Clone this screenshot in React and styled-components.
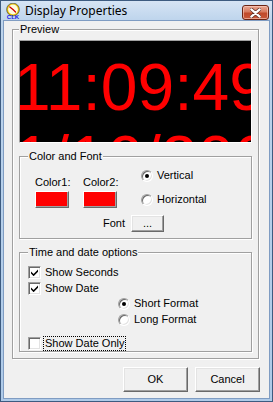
import React from "react";
import styled, { createGlobalStyle } from "styled-components";

const GlobalStyle = createGlobalStyle`
  html, body {
    margin: 0;
    padding: 0;
    background: #fff;
  }
  body {
    font-family: "Liberation Sans", Arial, sans-serif;
    font-size: 11px;
    color: #000;
  }
  * {
    box-sizing: border-box;
  }
`;

const Window = styled.div`
  width: 273px;
  height: 402px;
  display: flex;
  flex-direction: column;
  border: 1px solid #3d5b80;
  background: linear-gradient(#d6e4f4, #bdd4ec 20px, #aecae8);
  padding: 0 2px 2px;
`;

const TitleBar = styled.div`
  height: 19px;
  flex: none;
  display: flex;
  align-items: center;
  padding-left: 2px;
`;

const Title = styled.span`
  font-family: "Noto Sans", "Open Sans", sans-serif;
  font-size: 12px;
  margin-left: 4px;
  color: #000;
`;

const CloseButton = styled.div`
  margin-left: auto;
  margin-right: 1px;
  align-self: flex-start;
  margin-top: 4px;
  width: 27px;
  height: 15px;
  border: 1px solid #6b2414;
  border-radius: 3px;
  background: linear-gradient(#e9a894, #d77a5f 45%, #c0492a 55%, #c9583a);
  box-shadow: inset 0 0 0 1px rgba(255, 210, 195, 0.6);
  display: flex;
  align-items: center;
  justify-content: center;
`;

const Client = styled.div`
  flex: 1;
  display: flex;
  flex-direction: column;
  background: #f0f0f0;
  border: 1px solid #7f9cc2;
  padding: 2px 9px 6px 8px;
`;

const Group = styled.fieldset`
  margin: 0 ${(p) => p.$mr || 0}px 0 0;
  padding: ${(p) => p.$pad};
  border: 1px solid #a0a0a0;
  box-shadow: inset 1px 1px 0 #fff, 1px 1px 0 #fff;
  min-width: 0;
  display: flex;
  flex-direction: column;
  gap: ${(p) => p.$gap || 0}px;
`;

const Legend = styled.legend`
  padding: 0 1px;
  line-height: 13px;
  background: #f0f0f0;
`;

const PreviewScreen = styled.div`
  height: 103px;
  flex: none;
  background: #000;
  border: 1px solid;
  border-color: #a0a0a0 #fff #fff #a0a0a0;
  overflow: hidden;
  color: #ff0000;
  font-family: "Liberation Sans", Arial, sans-serif;
  font-size: 66px;
  line-height: 72px;
  white-space: nowrap;
  padding: 10px 0 0;
`;

const ClockLine = styled.div`
  margin-left: -6px;
`;

const ColorTop = styled.div`
  display: flex;
  align-items: flex-start;
  height: 39px;
`;

const ColorColumn = styled.div`
  width: ${(p) => p.$w}px;
  margin-left: ${(p) => p.$ml || 0}px;
  padding-top: 7px;
  display: flex;
  flex-direction: column;
  gap: 2px;
`;

const Label = styled.span`
  line-height: 13px;
`;

const RaisedButton = styled.button`
  font: inherit;
  color: #000;
  margin: 0;
  padding: 0;
  width: ${(p) => p.$w}px;
  height: ${(p) => p.$h}px;
  background: ${(p) => p.$fill || "#f0f0f0"};
  border: 1px solid;
  border-color: #fff #696969 #696969 #fff;
  box-shadow: inset -1px -1px 0 #a0a0a0
    ${(p) => (p.$fill ? "" : ", inset 1px 1px 0 #e3e3e3")};
  line-height: 1;
`;

const RadioColumn = styled.div`
  display: flex;
  flex-direction: column;
  gap: 11px;
`;

const OptionRow = styled.label`
  display: flex;
  align-items: center;
  gap: 4px;
  height: 13px;
  line-height: 13px;
  padding-left: ${(p) => p.$indent || 0}px;
  margin-top: ${(p) => p.$mt || 0}px;
`;

const RadioCircle = styled.span`
  width: 12px;
  height: 12px;
  flex: none;
  border-radius: 50%;
  background: #fff;
  border: 1px solid;
  border-color: #a0a0a0 #fff #fff #a0a0a0;
  box-shadow: inset 1px 1px 0 #696969, inset -1px -1px 0 #e3e3e3;
  display: flex;
  align-items: center;
  justify-content: center;
  &::after {
    content: "";
    width: 4px;
    height: 4px;
    border-radius: 50%;
    background: ${(p) => (p.$on ? "#000" : "transparent")};
  }
`;

const CheckBox = styled.span`
  width: 13px;
  height: 13px;
  flex: none;
  background: #fff;
  border: 1px solid;
  border-color: #a0a0a0 #fff #fff #a0a0a0;
  box-shadow: inset 1px 1px 0 #696969, inset -1px -1px 0 #e3e3e3;
  display: flex;
  align-items: center;
  justify-content: center;
`;

const FocusText = styled.span`
  outline: 1px dotted #000;
  outline-offset: 0;
  padding: 0 1px;
  margin-left: -1px;
`;

const FontRow = styled.div`
  display: flex;
  align-items: center;
  justify-content: flex-end;
  gap: 6px;
  padding-right: 79px;
  height: 17px;
`;

const TimeOptions = styled.div`
  display: flex;
  flex-direction: column;
`;

const ButtonRow = styled.div`
  margin-top: auto;
  display: flex;
  justify-content: flex-end;
  gap: 7px;
`;

function AppIcon() {
  return (
    <svg width="16" height="16" viewBox="0 0 16 16">
      <circle cx="8" cy="6.5" r="5.6" fill="#fffbe0" stroke="#e8c000" strokeWidth="1.4" />
      <circle cx="8" cy="6.5" r="6.4" fill="none" stroke="#333" strokeWidth="0.6" />
      <path d="M8 6.5 L4.8 4 M8 6.5 L10.5 9" stroke="#d00000" strokeWidth="1.3" strokeLinecap="round" />
      <text
        x="8"
        y="15.8"
        fontSize="6"
        fontWeight="bold"
        fill="#1a1ae6"
        textAnchor="middle"
        fontFamily="Liberation Sans, sans-serif"
      >
        CLK
      </text>
    </svg>
  );
}

function CloseGlyph() {
  return (
    <svg width="11" height="10" viewBox="0 0 11 10">
      <path
        d="M1 1 L10 9 M10 1 L1 9"
        stroke="#5a2a20"
        strokeWidth="3.6"
        strokeLinecap="round"
      />
      <path
        d="M1.3 1.3 L9.7 8.7 M9.7 1.3 L1.3 8.7"
        stroke="#fff"
        strokeWidth="2.2"
        strokeLinecap="round"
      />
    </svg>
  );
}

function Check() {
  return (
    <svg width="7" height="7" viewBox="0 0 7 7">
      <polygon points="0,2.4 2.6,5 7,0.4 7,2.8 2.6,7.2 0,4.6" fill="#000" />
    </svg>
  );
}

function Checkbox({ checked, children, mt, focus }) {
  return (
    <OptionRow $mt={mt}>
      <CheckBox>{checked && <Check />}</CheckBox>
      {focus ? <FocusText>{children}</FocusText> : <span>{children}</span>}
    </OptionRow>
  );
}

function Radio({ on, children, indent, mt }) {
  return (
    <OptionRow $indent={indent} $mt={mt}>
      <RadioCircle $on={on} />
      <span>{children}</span>
    </OptionRow>
  );
}

export default function App() {
  return (
    <>
      <GlobalStyle />
      <Window>
        <TitleBar>
          <AppIcon />
          <Title>Display Properties</Title>
          <CloseButton>
            <CloseGlyph />
          </CloseButton>
        </TitleBar>
        <Client>
          <Group $pad="4px 6px 6px" $mr={1} $gap={7}>
            <Legend>Preview</Legend>
            <PreviewScreen>
              <ClockLine>11:09:49</ClockLine>
              <ClockLine>1/16/2008</ClockLine>
            </PreviewScreen>

            <Group $pad="6px 8px 6px" $gap={7}>
              <Legend>Color and Font</Legend>
              <ColorTop>
                <ColorColumn $w={48} $ml={7}>
                  <Label>Color1:</Label>
                  <RaisedButton $w={34} $h={17} $fill="#ff0000" />
                </ColorColumn>
                <ColorColumn $w={58}>
                  <Label>Color2:</Label>
                  <RaisedButton $w={34} $h={17} $fill="#ff0000" />
                </ColorColumn>
                <RadioColumn>
                  <Radio on>Vertical</Radio>
                  <Radio>Horizontal</Radio>
                </RadioColumn>
              </ColorTop>
              <FontRow>
                <Label>Font</Label>
                <RaisedButton $w={33} $h={17}>
                  ...
                </RaisedButton>
              </FontRow>
            </Group>

            <Group $pad="7px 8px 1px">
              <Legend>Time and date options</Legend>
              <TimeOptions>
                <Checkbox checked>Show Seconds</Checkbox>
                <Checkbox checked mt={3}>
                  Show Date
                </Checkbox>
                <Radio on indent={90} mt={2}>
                  Short Format
                </Radio>
                <Radio indent={90} mt={3}>
                  Long Format
                </Radio>
                <Checkbox mt={11} focus>
                  Show Date Only
                </Checkbox>
              </TimeOptions>
            </Group>
          </Group>

          <ButtonRow>
            <RaisedButton $w={65} $h={25}>
              OK
            </RaisedButton>
            <RaisedButton $w={65} $h={25}>
              Cancel
            </RaisedButton>
          </ButtonRow>
        </Client>
      </Window>
    </>
  );
}
